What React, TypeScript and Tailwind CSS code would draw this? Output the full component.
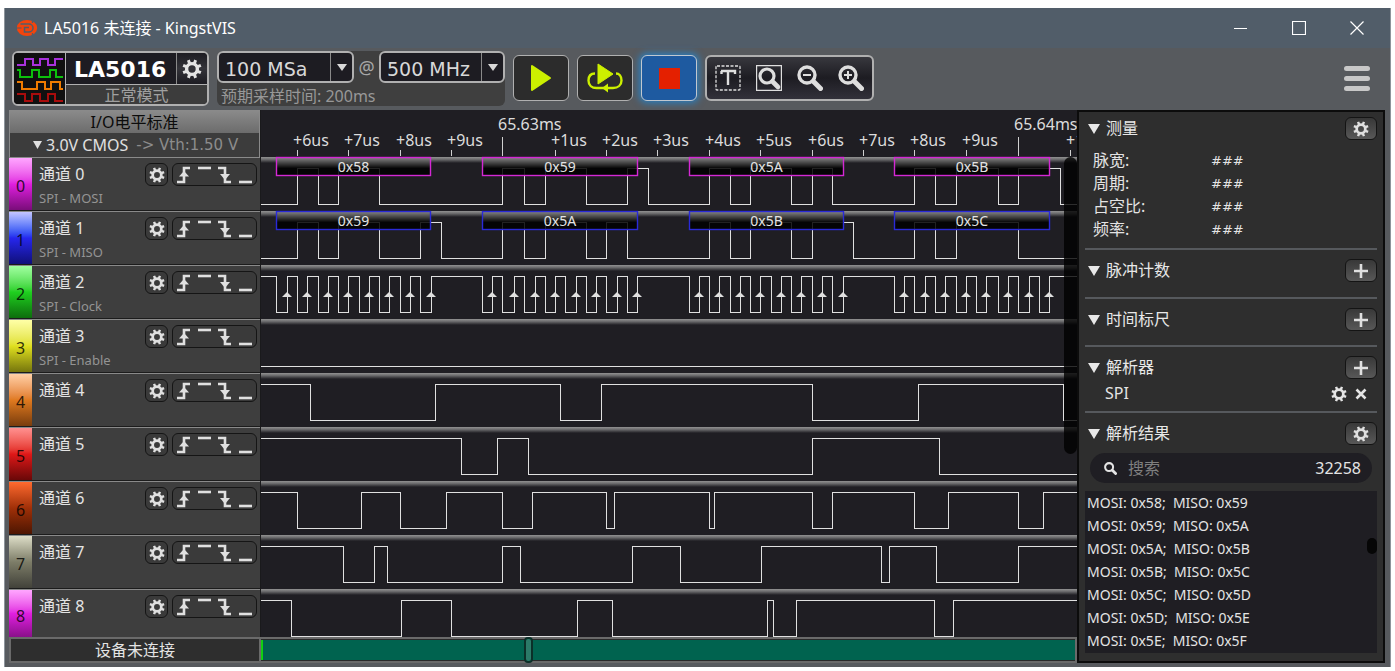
import React from "react";

const CHANNELS = [
  { name: "通道 0", decoder: "SPI - MOSI", strip: "from-[#ffa6ff] via-[#e01fe0] to-[#7a0d7a]" },
  { name: "通道 1", decoder: "SPI - MISO", strip: "from-[#c4c4ff] via-[#2626ee] to-[#10107a]" },
  { name: "通道 2", decoder: "SPI - Clock", strip: "from-[#a0ffa0] via-[#1fd01f] to-[#0d6e0d]" },
  { name: "通道 3", decoder: "SPI - Enable", strip: "from-[#ffffa6] via-[#e0e01f] to-[#76760d]" },
  { name: "通道 4", decoder: "", strip: "from-[#ffd0a6] via-[#e07a1f] to-[#7a3d0d]" },
  { name: "通道 5", decoder: "", strip: "from-[#ff9090] via-[#e01818] to-[#6a0808]" },
  { name: "通道 6", decoder: "", strip: "from-[#ff6a2e] via-[#a03008] to-[#4e1602]" },
  { name: "通道 7", decoder: "", strip: "from-[#dedec8] via-[#7d7d68] to-[#42423a]" },
  { name: "通道 8", decoder: "", strip: "from-[#ffa6ff] via-[#e01fe0] to-[#8a108a]" },
];

// level before the first edge, then the x of every edge
const WAVES: { start: 0 | 1; edges: number[] }[] = [
  { start: 0, edges: [36, 57, 77, 118, 241, 263, 284, 325, 366, 387, 448, 469, 489, 530, 551, 571, 653, 674, 695, 737, 757, 799] },
  { start: 0, edges: [36, 57, 77, 118, 159, 180, 241, 263, 284, 325, 345, 366, 448, 469, 489, 530, 551, 592, 653, 674, 695, 757] },
  {
    start: 1,
    edges: [
      15, 26, 36, 46, 57, 67, 77, 87, 98, 108, 118, 128, 139, 149, 159, 170,
      221, 231, 241, 253, 263, 274, 284, 294, 304, 315, 325, 335, 345, 356, 366, 376,
      428, 438, 448, 458, 469, 479, 489, 499, 510, 520, 530, 540, 551, 561, 571, 582,
      633, 643, 653, 664, 674, 684, 695, 705, 715, 725, 737, 747, 757, 768, 778, 788,
    ],
  },
  { start: 0, edges: [] },
  { start: 1, edges: [49, 174, 299, 340, 551, 657, 802] },
  { start: 1, edges: [200, 236, 267, 551, 678] },
  { start: 1, edges: [36, 100, 139, 185, 241, 271, 345, 353, 448, 453, 551, 571, 653, 687, 757, 782] },
  { start: 1, edges: [82, 113, 126, 241, 259, 371, 419, 500, 620, 628, 675, 757] },
  { start: 1, edges: [30, 140, 190, 316, 351, 506, 512, 535, 673, 692] },
];

const TICKS = [
  { x: 36, label: "+6us" },
  { x: 87, label: "+7us" },
  { x: 139, label: "+8us" },
  { x: 190, label: "+9us" },
  { x: 241, label: "65.63ms", major: true },
  { x: 294, label: "+1us" },
  { x: 345, label: "+2us" },
  { x: 396, label: "+3us" },
  { x: 448, label: "+4us" },
  { x: 499, label: "+5us" },
  { x: 551, label: "+6us" },
  { x: 602, label: "+7us" },
  { x: 653, label: "+8us" },
  { x: 705, label: "+9us" },
  { x: 757, label: "65.64ms", major: true },
  { x: 809, label: "+1us" },
];

const FRAMES = [
  { x: 15, width: 155, mosi: "0x58", miso: "0x59" },
  { x: 221, width: 156, mosi: "0x59", miso: "0x5A" },
  { x: 428, width: 155, mosi: "0x5A", miso: "0x5B" },
  { x: 633, width: 156, mosi: "0x5B", miso: "0x5C" },
];

const RESULTS = [
  ["0x58", "0x59"],
  ["0x59", "0x5A"],
  ["0x5A", "0x5B"],
  ["0x5B", "0x5C"],
  ["0x5C", "0x5D"],
  ["0x5D", "0x5E"],
  ["0x5E", "0x5F"],
];

const ROW = 54;
const RULER = 47;
const HIGH = 11;
const LOW = 47;
const PLOT_END = 4000;

const wavePath = (index: number) => {
  const { start, edges } = WAVES[index];
  const top = RULER + index * ROW;
  let level = start;
  let d = `M0 ${top + (level ? HIGH : LOW)}`;
  edges.forEach((x) => {
    d += `H${x}`;
    level = level ? 0 : 1;
    d += `V${top + (level ? HIGH : LOW)}`;
  });
  return d + `H${PLOT_END}`;
};

const TEETH = [0, 45, 90, 135, 180, 225, 270, 315];

const Gear = ({ className }: { className: string }) => (
  <svg viewBox="0 0 20 20" className={className} aria-hidden="true">
    <circle cx="10" cy="10" r="5.4" fill="none" stroke="currentColor" strokeWidth="3.4" />
    {TEETH.map((a) => (
      <path key={a} d="M8.5 4V.4h3V4z" fill="currentColor" transform={`rotate(${a + 22.5} 10 10)`} />
    ))}
  </svg>
);

const Plus = () => (
  <svg viewBox="0 0 14 14" className="size-[14px]" aria-hidden="true">
    <path d="M7 0v14M0 7h14" stroke="currentColor" strokeWidth="2.6" />
  </svg>
);

const Triangle = ({ className }: { className: string }) => (
  <svg viewBox="0 0 12 10" preserveAspectRatio="none" className={className} aria-hidden="true">
    <path d="M0 0h12L6 10z" fill="currentColor" />
  </svg>
);

const Magnifier = ({ children }: { children?: React.ReactNode }) => (
  <svg viewBox="0 0 26 26" className="block size-[26px]" aria-hidden="true">
    <circle cx="10" cy="10" r="8" fill="none" stroke="currentColor" strokeWidth="3.4" />
    <path d="M16.500 16.500l7 7" stroke="currentColor" strokeWidth="5" strokeLinecap="round" />
    {children}
  </svg>
);

const TitleBar = () => (
  <header className="flex h-10 items-center bg-[#515d69] pl-[11px] text-white">
    <svg viewBox="0 0 22 20" className="h-5 w-[22px]" aria-hidden="true">
      <ellipse cx="11" cy="10" rx="10.2" ry="8" fill="#f4440c" />
      <path d="M4.500 6h8.500a4 4 0 0 1 0 8H8.500V9.500H13" fill="none" stroke="#515d69" strokeWidth="1.500" />
      <path d="M0 10h5.500" stroke="#515d69" />
      <path d="M16.500 1.500v3.500M16.500 15v3.500" stroke="#515d69" strokeWidth="1.300" />
    </svg>
    <h1 className="ml-[6px] flex-1 text-base">LA5016 未连接 - KingstVIS</h1>
    <button type="button" aria-label="最小化" className="flex h-10 w-[58px] items-center justify-center">
      <svg viewBox="0 0 14 14" className="size-[14px]">
        <path d="M0 7.500h13" stroke="currentColor" />
      </svg>
    </button>
    <button type="button" aria-label="最大化" className="flex h-10 w-[58px] items-center justify-center">
      <svg viewBox="0 0 14 14" className="size-[14px]">
        <path d="M.5.5h13v13H.5z" fill="none" stroke="currentColor" strokeWidth="1.200" />
      </svg>
    </button>
    <button type="button" aria-label="关闭" className="mr-1 flex h-10 w-[58px] items-center justify-center">
      <svg viewBox="0 0 14 14" className="size-[14px]">
        <path d="M.5.5l13 13M13.500.5l-13 13" stroke="currentColor" strokeWidth="1.200" />
      </svg>
    </button>
  </header>
);

const DevicePanel = () => (
  <div className="flex h-[55px] w-[197px] overflow-hidden rounded-md border-2 border-[#b0b0b0] bg-[#1d1c22]">
    <div className="w-[51px] bg-[#101010]">
      <svg viewBox="0 0 51 51" className="size-[51px]" fill="none" strokeWidth="2" aria-hidden="true">
        <path d="M3 12h8V6h8v6h7V6h8v6h7V6h8" stroke="#a832dc" />
        <path d="M3 17h3v7h12v-7h7v7h11v-7h6v7h7" stroke="#0cc00c" />
        <path d="M3 29h5v7h15v-7h8v7h6v-7h9v7h3" stroke="#f07c00" />
        <path d="M3 41h8v7h7v-7h8v7h8v-7h7v7h8" stroke="#a80c0c" />
      </svg>
    </div>
    <div className="flex flex-1 flex-col border-l border-[#b0b0b0]">
      <div className="flex h-[31px]">
        <strong className="flex-1 pl-2 font-['DejaVu_Sans'] text-[22px] leading-[33px] font-bold text-white">
          LA5016
        </strong>
        <button
          type="button"
          aria-label="设备设置"
          className="flex w-[31px] items-center justify-center border-l border-[#8a8a8a] bg-linear-to-b from-[#1d1c22] via-[#34343a] to-[#1d1c22] text-[#e4e4e4]"
        >
          <Gear className="size-5" />
        </button>
      </div>
      <div className="flex-1 border-t border-[#b0b0b0] bg-[#3c3c3c] text-center text-base leading-[20px] text-[#a0a0a0]">
        正常模式
      </div>
    </div>
  </div>
);

type ComboProps = { label: string; value: string; width: string };

const Combo = ({ label, value, width }: ComboProps) => (
  <div className={`relative flex h-8 rounded-md border-2 border-[#b0b0b0] bg-[#1d1c22] ${width}`}>
    <select
      aria-label={label}
      className="w-full appearance-none bg-transparent pt-[2px] pl-[6px] font-['DejaVu_Sans'] text-[19px] leading-7 text-[#d8d8d8] outline-none"
    >
      <option>{value}</option>
    </select>
    <span className="pointer-events-none absolute inset-y-0 right-0 flex w-[22px] items-center justify-center border-l border-[#8a8a8a] text-[#d8d8d8]">
      <Triangle className="h-[7px] w-[10px]" />
    </span>
  </div>
);

const SampleSettings = () => (
  <div className="ml-2 h-[55px] w-[288px] rounded-md bg-[#3f3f3f]">
    <div className="flex items-center justify-between">
      <Combo label="采样深度" value="100 MSa" width="w-[137px]" />
      <span className="text-lg text-[#a8a8a8]">@</span>
      <Combo label="采样率" value="500 MHz" width="w-[126px]" />
    </div>
    <p className="pl-1 text-base leading-[26px] text-[#989898]">预期采样时间: 200ms</p>
  </div>
);

const Toolbar = () => (
  <div className="flex h-[62px] items-start bg-[#575a5e] pt-[3px] pl-[7px]">
    <DevicePanel />
    <SampleSettings />
    <div className="mt-1 ml-2 flex gap-2">
      <button
        type="button"
        aria-label="开始采样"
        className="flex h-[46px] w-14 items-center justify-center rounded-md border border-[#b0b0b0] bg-[#2c2c2c]"
      >
        <svg viewBox="0 0 24 28" className="h-7 w-6">
          <path d="M3 2l18 12L3 26z" fill="#ccf000" stroke="#ccf000" strokeWidth="2" strokeLinejoin="round" />
        </svg>
      </button>
      <button
        type="button"
        aria-label="循环采样"
        className="flex h-[46px] w-14 items-center justify-center rounded-md border border-[#b0b0b0] bg-[#2c2c2c]"
      >
        <svg viewBox="0 0 38 32" className="h-8 w-[38px]">
          <path d="M12 2l15 10L12 22z" fill="#ccf000" stroke="#ccf000" strokeLinejoin="round" />
          <path
            d="M9 11.500c-4 0-6.500 2.500-6.500 7 0 5 3.500 7.500 8 7.500H27c5 0 8.500-3 8.500-7.500 0-4.500-2.500-7-5.500-7"
            fill="none"
            stroke="#ccf000"
            strokeWidth="2.400"
          />
          <path d="M16 26l6-4.500v9z" fill="#ccf000" />
        </svg>
      </button>
      <button
        type="button"
        aria-label="停止"
        className="flex h-[46px] w-14 items-center justify-center rounded-md border border-[#c0c8d0] bg-[#1e5aa0] shadow-[0_0_7px_2px_#2a7fc0]"
      >
        <span className="size-[21px] bg-[#e42000]" />
      </button>
      <div className="flex h-[46px] w-[169px] items-center justify-between rounded-md border-2 border-[#b0b0b0] bg-linear-to-b from-[#38383e] via-[#1d1c22] to-[#32313a] px-2 text-[#dedede]">
        <button type="button" aria-label="文本标记">
          <svg viewBox="0 0 26 26" className="block size-[26px]">
            <rect x="1" y="1" width="24" height="24" rx="1" fill="none" stroke="currentColor" strokeWidth="1.300" strokeDasharray="3 1.500" />
            <path d="M6 6h14v3M6.500 9V6M13 6v14" fill="none" stroke="currentColor" strokeWidth="2.400" />
          </svg>
        </button>
        <button type="button" aria-label="缩放到窗口">
          <svg viewBox="0 0 26 26" className="block size-[26px]">
            <path d="M.5.5h25v25H.5z" fill="none" stroke="currentColor" strokeWidth="1.400" />
            <circle cx="11" cy="11" r="7" fill="none" stroke="currentColor" strokeWidth="3.200" />
            <path d="M16.500 16.500l5.500 5.500" stroke="currentColor" strokeWidth="4.600" strokeLinecap="round" />
          </svg>
        </button>
        <button type="button" aria-label="缩小">
          <Magnifier>
            <path d="M6 10h8" stroke="currentColor" strokeWidth="2" />
          </Magnifier>
        </button>
        <button type="button" aria-label="放大">
          <Magnifier>
            <path d="M6 10h8M10 6v8" stroke="currentColor" strokeWidth="2" />
          </Magnifier>
        </button>
      </div>
    </div>
    <button type="button" aria-label="菜单" className="mt-[15px] mr-5 ml-auto flex w-[26px] flex-col gap-[5px]">
      <span className="h-[5px] w-full rounded-full bg-[#c8c8c8]" />
      <span className="h-[5px] w-full rounded-full bg-[#c8c8c8]" />
      <span className="h-[5px] w-full rounded-full bg-[#c8c8c8]" />
    </button>
  </div>
);

const TriggerPicker = () => (
  <button
    type="button"
    aria-label="触发条件"
    className="flex h-[23px] w-[85px] items-center justify-center rounded-md border border-[#151515] bg-[#3a3a3a]"
  >
    <svg viewBox="0 0 76 18" className="h-[18px] w-[76px]" fill="none" stroke="#e0e0e0" strokeWidth="2.600">
      <path d="M0 16h7V2h6" />
      <path d="M2 10.500h10L7 5z" fill="#e0e0e0" stroke="none" />
      <path d="M21 2h13" />
      <path d="M41 2h7v14h6" />
      <path d="M43 8h10l-5 6z" fill="#e0e0e0" stroke="none" />
      <path d="M62 16h13" />
    </svg>
  </button>
);

const ChannelList = () => (
  <ul>
    {CHANNELS.map((channel, i) => (
      <li
        key={channel.name}
        className="flex h-[54px] border-t border-b border-t-[#8a8a8a] border-b-[#1c1c1c] bg-[#3e3e3e] last:h-12 last:border-b-0"
      >
        <span
          className={`flex w-[23px] items-center justify-center bg-linear-to-b pt-1 text-base leading-5 text-black/80 ${channel.strip}`}
        >
          {i}
        </span>
        <div className="flex flex-1 flex-col pt-[5px] pl-[7px]">
          <div className="flex h-[23px] items-center">
            <span className="flex-1 text-base leading-[23px] text-[#e4e4e4]">{channel.name}</span>
            <button
              type="button"
              aria-label={`${channel.name} 设置`}
              className="mr-1 flex size-[23px] items-center justify-center rounded-md border border-[#151515] bg-[#3a3a3a] text-[#e0e0e0]"
            >
              <Gear className="size-4" />
            </button>
            <TriggerPicker />
            <span className="w-[3px]" />
          </div>
          <span className="text-[13px] leading-6 text-[#949494]">{channel.decoder}</span>
        </div>
      </li>
    ))}
  </ul>
);

const ChannelPanel = () => (
  <div className="flex w-[252px] shrink-0 flex-col">
    <div className="flex flex-1 flex-col border-r border-[#1a1a1c]">
      <div className="h-[47px] border border-b-0 border-[#8a8a8a] bg-[#3c3c3c]">
        <h2 className="h-[22px] bg-linear-to-b from-[#8a8a8a] to-[#6c6c6c] text-center text-base leading-[22px] text-[#0c0c0c]">
          I/O电平标准
        </h2>
        <button type="button" className="flex h-6 w-full items-center pl-[23px] text-base leading-6 text-[#e0e0e0]">
          <Triangle className="mr-1 h-2 w-[9px]" />
          <span>3.0V CMOS</span>
          <span className="ml-2 font-['DejaVu_Sans'] text-[15px] text-[#8c8c8c]">-&gt; Vth:1.50 V</span>
        </button>
      </div>
      <ChannelList />
    </div>
    <p className="h-[26px] border-2 border-[#6a6a6a] bg-[#2e2e2e] text-center text-base leading-[22px] text-[#e4e4e4]">
      设备未连接
    </p>
  </div>
);

const Frame = ({ x, y, width, color, text }: { x: number; y: number; width: number; color: string; text: string }) => (
  <g>
    <rect x={x} y={y} width={width} height="18" fill="#000" fillOpacity="0.85" />
    <rect x={x} y={y} width={width} height="11" fill="url(#frame-shine)" />
    <rect x={x + 0.5} y={y + 0.5} width={width - 1} height="18" fill="none" stroke={color} strokeWidth="1.400" />
    <text x={x + width / 2} y={y + 15} textAnchor="middle" fontSize="14" fill="#e4e4e4">
      {text}
    </text>
  </g>
);

const Waveforms = () => (
  <svg className="block h-[527px] w-full" aria-label="波形">
    <defs>
      <linearGradient id="row-shine" x1="0" y1="0" x2="0" y2="1">
        <stop offset="0" stopColor="#929292" />
        <stop offset="0.4" stopColor="#6c6c6e" />
        <stop offset="1" stopColor="#1f1e23" />
      </linearGradient>
      <linearGradient id="frame-shine" x1="0" y1="0" x2="0" y2="1">
        <stop offset="0" stopColor="#8c8c8c" />
        <stop offset="1" stopColor="#080808" />
      </linearGradient>
    </defs>
    {TICKS.map(({ x, label, major }) => (
      <g key={x}>
        <path d={major ? `M${x} 27V46` : `M${x} 40V46`} stroke="#d0d0d0" shapeRendering="crispEdges" />
        <text x={x - 4} y={major ? 20 : 36} fontSize="16" fill="#dcdcdc">
          {label}
        </text>
      </g>
    ))}
    {WAVES.map((_, i) => (
      <g key={i}>
        <rect x="0" y={RULER + i * ROW} width="100%" height="6" fill="url(#row-shine)" />
        <path d={wavePath(i)} fill="none" stroke="#e0e0e0" shapeRendering="crispEdges" />
      </g>
    ))}
    {WAVES[2].edges
      .filter((_, i) => i % 2 === 1)
      .map((x) => (
        <path key={x} d={`M${x - 5} ${RULER + 2 * ROW + 32}l5-5 5 5z`} fill="#e0e0e0" />
      ))}
    {FRAMES.map((frame) => (
      <React.Fragment key={frame.x}>
        <Frame x={frame.x} y={RULER} width={frame.width} color="#d428d4" text={frame.mosi} />
        <Frame x={frame.x} y={RULER + ROW} width={frame.width} color="#2a2ad8" text={frame.miso} />
      </React.Fragment>
    ))}
  </svg>
);

const Plot = () => (
  <div className="flex min-w-0 flex-1 flex-col bg-[#1f1e23]">
    <div className="relative overflow-hidden">
      <Waveforms />
      <div className="absolute top-[47px] right-0 h-[297px] w-[13px] rounded-full bg-black/80" />
    </div>
    <div className="relative h-[26px] border-2 border-l-0 border-[#6a6a6a] bg-[#2a2a2a] py-px">
      <div className="h-full border-l-2 border-[#10d010] bg-[#00634f]" />
      <div className="absolute -top-[2px] left-[32.3%] h-[26px] w-[9px] rounded-sm border-2 border-[#0b2f28] bg-[#2b7a68]" />
    </div>
  </div>
);

const PanelButton = ({ label, children }: { label: string; children: React.ReactNode }) => (
  <button
    type="button"
    aria-label={label}
    className="flex h-[23px] w-8 items-center justify-center rounded-md border border-[#141414] bg-linear-to-b from-[#383838] to-[#585858] text-[#e0e0e0]"
  >
    {children}
  </button>
);

const SectionHeader = ({ title, children }: { title: string; children: React.ReactNode }) => (
  <div className="flex h-[23px] items-center justify-between">
    <button type="button" className="flex items-center gap-[6px] pl-[3px] text-base leading-[23px] text-[#e8e8e8]">
      <Triangle className="h-[10px] w-3" />
      {title}
    </button>
    {children}
  </div>
);

const SidePanel = () => (
  <aside className="flex w-[308px] shrink-0 flex-col border-2 border-[#0c0c0c] bg-[#2e2e2e] px-[6px] pt-[5px] text-[#e4e4e4]">
    <section className="border-b-2 border-[#56595d] pb-[7px]">
      <SectionHeader title="测量">
        <PanelButton label="测量设置">
          <Gear className="size-4" />
        </PanelButton>
      </SectionHeader>
      <dl className="grid grid-cols-[118px_1fr] pt-[9px] pl-2 text-base leading-[23px]">
        {["脉宽", "周期", "占空比", "频率"].map((name) => (
          <React.Fragment key={name}>
            <dt>{name}:</dt>
            <dd className="font-['DejaVu_Sans'] text-[13px]">###</dd>
          </React.Fragment>
        ))}
      </dl>
    </section>
    <section className="border-b-2 border-[#56595d] pt-[9px] pb-[15px]">
      <SectionHeader title="脉冲计数">
        <PanelButton label="添加脉冲计数">
          <Plus />
        </PanelButton>
      </SectionHeader>
    </section>
    <section className="border-b-2 border-[#56595d] pt-[9px] pb-[14px]">
      <SectionHeader title="时间标尺">
        <PanelButton label="添加时间标尺">
          <Plus />
        </PanelButton>
      </SectionHeader>
    </section>
    <section className="border-b-2 border-[#56595d] pt-[9px] pb-[6px]">
      <SectionHeader title="解析器">
        <PanelButton label="添加解析器">
          <Plus />
        </PanelButton>
      </SectionHeader>
      <div className="flex h-[26px] items-center pt-[3px] pr-[10px] pl-5 text-base leading-[23px]">
        <span className="flex-1">SPI</span>
        <button type="button" aria-label="SPI 设置">
          <Gear className="block size-4" />
        </button>
        <button type="button" aria-label="移除 SPI" className="ml-2">
          <svg viewBox="0 0 12 12" className="block size-3">
            <path d="M1.500 1.500l9 9M10.500 1.500l-9 9" stroke="currentColor" strokeWidth="2.600" />
          </svg>
        </button>
      </div>
    </section>
    <section className="pt-[9px]">
      <SectionHeader title="解析结果">
        <PanelButton label="解析结果设置">
          <Gear className="size-4" />
        </PanelButton>
      </SectionHeader>
      <label className="mx-[5px] mt-2 flex h-[30px] items-center rounded-full bg-[#1f1e23] pr-[11px] pl-[14px]">
        <svg viewBox="0 0 14 14" className="size-[13px]" fill="none" stroke="currentColor" aria-hidden="true">
          <circle cx="5.500" cy="5.500" r="4.300" strokeWidth="2.200" />
          <path d="M9 9l3.500 3.500" strokeWidth="3" strokeLinecap="round" />
        </svg>
        <input
          type="text"
          aria-label="搜索"
          placeholder="搜索"
          className="ml-[11px] min-w-0 flex-1 bg-transparent text-base outline-none placeholder:text-[#808080]"
        />
        <span className="text-base">32258</span>
      </label>
      <div className="relative mt-2 h-[162px] overflow-hidden bg-[#1f1e23]">
        <ul className="pl-[2px] text-sm leading-[23px] whitespace-pre">
          {RESULTS.map(([mosi, miso]) => (
            <li key={mosi}>{`MOSI: ${mosi};  MISO: ${miso}`}</li>
          ))}
        </ul>
        <div className="absolute top-[47px] right-0 h-4 w-[10px] rounded-full bg-[#060606]" />
      </div>
    </section>
  </aside>
);

export default function App() {
  return (
    <div className="min-h-screen bg-white px-1 pt-2 pb-1 font-['Noto_Sans','Noto_Sans_CJK_SC',sans-serif]">
      <div className="border-x border-[#8d949b] bg-[#575a5e]">
        <TitleBar />
        <Toolbar />
        <main className="flex pr-[5px] pb-1 pl-1">
          <ChannelPanel />
          <Plot />
          <SidePanel />
        </main>
      </div>
    </div>
  );
}
